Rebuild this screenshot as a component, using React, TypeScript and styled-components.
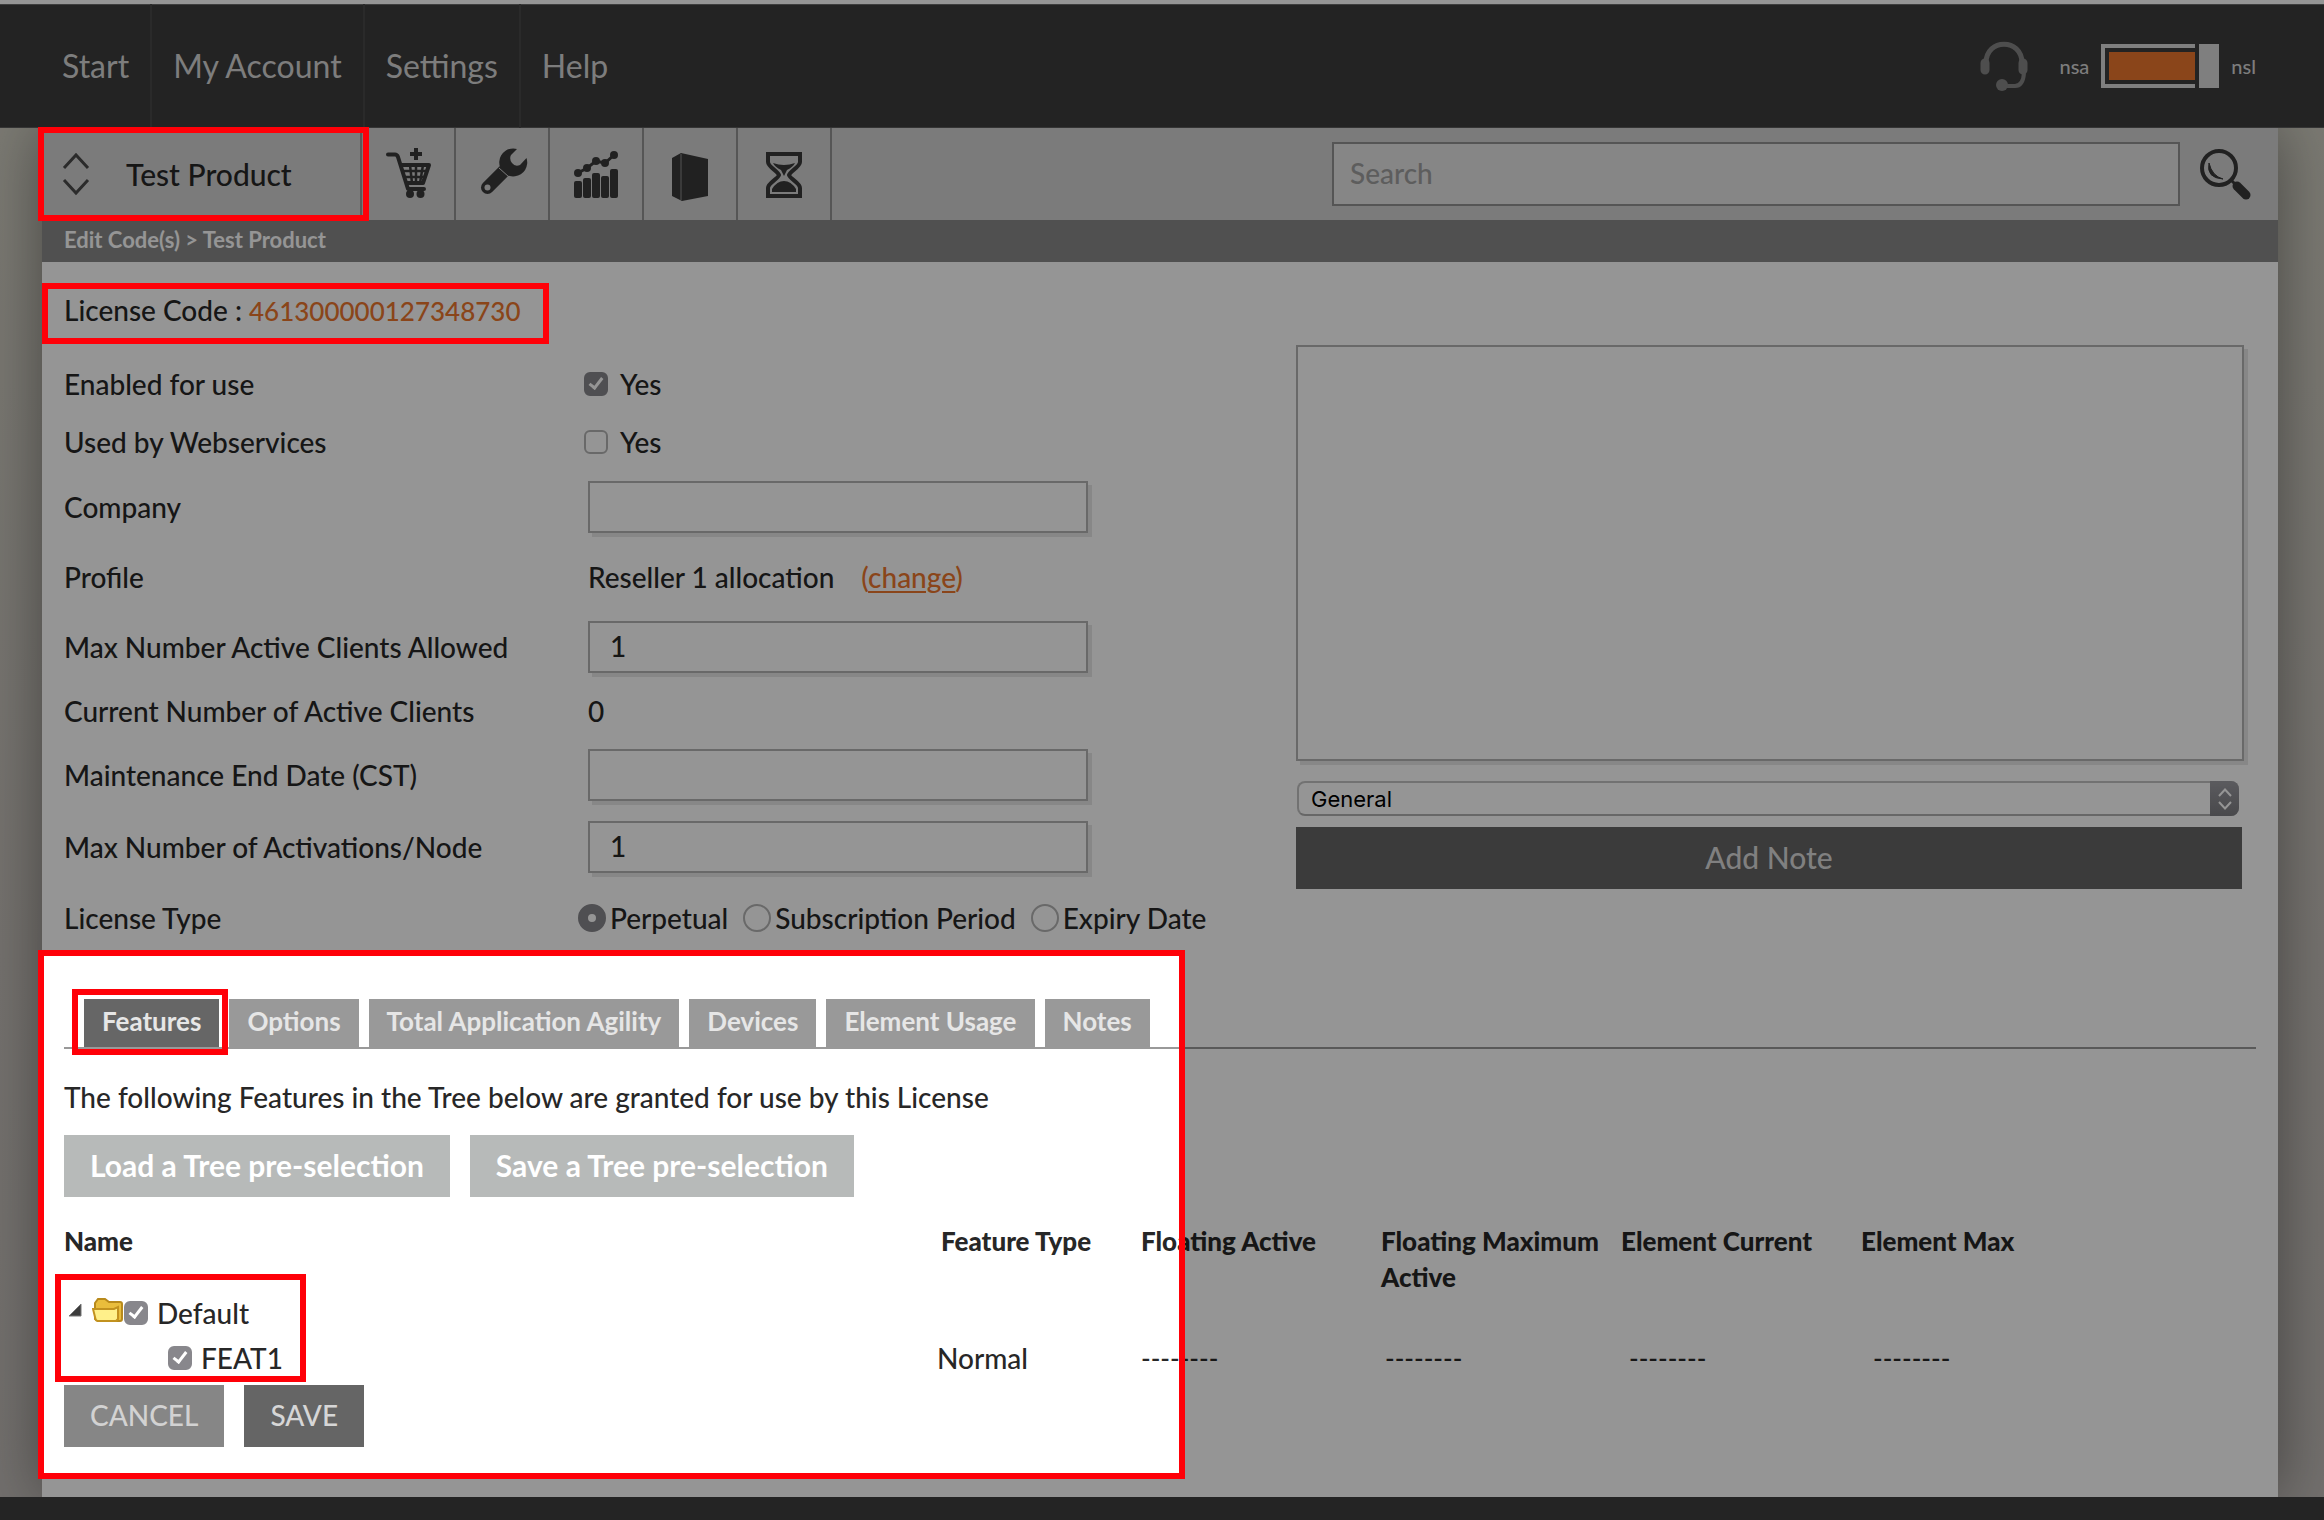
import React from 'react';
import styled, { createGlobalStyle, css } from 'styled-components';

const sans = `Lato, "Open Sans", "Liberation Sans", sans-serif`;
const ink = '#272727';
const accent = '#ed772e';
const line = '#b4b4b4';

const GlobalStyle = createGlobalStyle`
  *, *::before, *::after { box-sizing: border-box; }
  body {
    margin: 0;
    background: #3c3c3c;
    color: ${ink};
    font-family: ${sans};
    font-size: 28px;
    font-weight: 500;
    line-height: 36px;
  }
  button, input, select, textarea { font-family: inherit; font-weight: inherit; color: inherit; margin: 0; }
`;

const Page = styled.div`
  min-height: 100vh;
  display: flex;
  flex-direction: column;
`;

/* Red frame laid over the element that contains it. */
const Frame = styled.span<{ $top: number; $right: number; $bottom: number; $left: number }>`
  position: absolute;
  z-index: 2;
  top: ${p => -p.$top}px;
  right: ${p => -p.$right}px;
  bottom: ${p => -p.$bottom}px;
  left: ${p => -p.$left}px;
  border: 6px solid #ff0008;
  pointer-events: none;
`;

/* The frame that leaves its inside bright and dims the rest of the page. */
const Spotlight = styled.div`
  position: absolute;
  z-index: 1;
  top: -3px;
  bottom: 18px;
  left: -4px;
  width: 1147px;
  border: 6px solid #ff0008;
  box-shadow: 0 0 0 9999px rgba(0, 0, 0, 0.416);
  pointer-events: none;
`;

const TopBar = styled.header`
  position: relative;
  z-index: 0;
  display: flex;
  align-items: stretch;
  justify-content: space-between;
  height: 128px;
  padding: 0 68px 0 41px;
  background: #3c3c3c;
  border-top: 4px solid #fff;
  box-shadow: inset 0 1px 0 #6b6b6b, inset 0 -1px 0 #5c5c5c;
`;

const MainNav = styled.nav`
  display: flex;
`;

const NavLink = styled.a`
  display: flex;
  align-items: center;
  padding: 0 21px;
  border-right: 2px solid #484848;
  color: #d6d6d6;
  font-size: 32px;
  font-weight: 400;
  text-decoration: none;
  &:last-child { border-right: 0; }
`;

const Brand = styled.div`
  display: flex;
  align-items: center;
  gap: 12px;
  color: #d6d6d6;
  font-size: 20px;
  line-height: 24px;
`;

const HeadsetLink = styled.a`
  display: flex;
  margin-right: 18px;
`;

const Body = styled.div`
  padding: 0 46px 0 42px;
  background: linear-gradient(#d2d0c4, #c8c3bd 60%, #c4bfbb);
`;

const Panel = styled.main`
  background: #fff;
  box-shadow: 0 0 60px rgba(0, 0, 0, 0.42);
`;

const Toolbar = styled.div`
  display: flex;
  height: 92px;
  background: #d3d3d3;
`;

const ProductPicker = styled.button`
  position: relative;
  display: flex;
  align-items: center;
  gap: 36px;
  width: 320px;
  padding: 0 20px;
  border: 0;
  border-right: 2px solid #9a9a9a;
  background: none;
  font-size: 30px;
`;

const ToolButton = styled.button`
  display: flex;
  align-items: center;
  justify-content: center;
  width: 94px;
  padding: 0;
  border: 0;
  border-right: 2px solid #949494;
  background: none;
`;

const SearchForm = styled.form`
  display: flex;
  align-items: center;
  gap: 20px;
  flex: 1;
  margin: 0 26px 0 500px;
`;

const SearchInput = styled.input`
  flex: 1;
  min-width: 0;
  height: 64px;
  padding: 0 16px 2px;
  border: 2px solid #929292;
  background: #e6e6e6;
  font-size: 28px;
  &::placeholder { color: #a0a0a0; opacity: 1; }
`;

const PlainButton = styled.button`
  display: flex;
  padding: 0;
  border: 0;
  background: none;
`;

const Breadcrumb = styled.nav`
  height: 42px;
  padding: 0 22px;
  background: #898989;
  color: #fff;
  font-size: 22px;
  font-weight: 700;
  line-height: 40px;
`;

const LicenseLine = styled.div`
  padding: 30px 22px 26px;
`;

const LicenseCode = styled.span`
  position: relative;
  display: inline-block;
`;

const Accent = styled.span`
  color: ${accent};
`;

const CodeNumber = styled(Accent)`
  font-size: 26px;
`;

const FormArea = styled.div`
  display: grid;
  grid-template-columns: 1232fr 946fr;
  padding: 0 36px 0 22px;
`;

const Row = styled.div<{ $height: number }>`
  display: flex;
  align-items: center;
  height: ${p => p.$height}px;
`;

const Label = styled.label`
  width: 514px;
  flex: none;
`;

const Value = styled.div<{ $inset?: number; $gap?: number }>`
  display: flex;
  align-items: center;
  gap: ${p => p.$gap ?? 0}px;
  padding-left: ${p => p.$inset ?? 10}px;
`;

const boxed = css`
  border: 2px solid ${line};
  border-radius: 0;
  background: #fff;
  box-shadow: 4px 4px 0 #e8e8e8;
`;

const TextInput = styled.input`
  ${boxed}
  width: 500px;
  height: 52px;
  padding: 0 20px 2px;
  font-size: 28px;
`;

const Check = styled.input`
  appearance: none;
  position: relative;
  flex: none;
  width: 24px;
  height: 24px;
  border: 2px solid ${line};
  border-radius: 6px;
  background: #fff;
  &:checked { border-color: #88878c; background: #88878c; }
  &:checked::after {
    content: '';
    position: absolute;
    left: 6px;
    top: 1px;
    width: 8px;
    height: 14px;
    border: solid #fff;
    border-width: 0 3px 3px 0;
    transform: rotate(38deg);
  }
`;

const CheckLabel = styled.label`
  display: flex;
  align-items: center;
  gap: 12px;
`;

const Radio = styled.input`
  appearance: none;
  flex: none;
  width: 28px;
  height: 28px;
  border: 2px solid ${line};
  border-radius: 50%;
  background: #fff;
  &:checked { border: 10px solid #88878c; }
`;

const RadioLabel = styled.label`
  display: flex;
  align-items: center;
  gap: 4px;
`;

const ChangeLink = styled.a`
  color: ${accent};
  text-underline-offset: 3px;
`;

const Notes = styled.div`
  display: flex;
  flex-direction: column;
`;

const NoteText = styled.textarea`
  ${boxed}
  display: block;
  height: 416px;
  margin: -10px -2px 0 0;
  resize: none;
`;

const SelectBox = styled.div`
  position: relative;
  margin: 20px 3px 11px 1px;
`;

const Select = styled.select`
  appearance: none;
  display: block;
  width: 100%;
  height: 35px;
  padding: 0 40px 0 12px;
  border: 2px solid #c4c4c4;
  border-bottom-color: #b0b0b0;
  border-radius: 8px;
  background: #fff;
  color: #000;
  font-family: Inter, Roboto, sans-serif;
  font-size: 22px;
  font-weight: 400;
`;

const SelectArrows = styled.span`
  position: absolute;
  top: 0;
  right: 0;
  bottom: 0;
  display: flex;
  align-items: center;
  justify-content: center;
  width: 29px;
  border-radius: 0 8px 8px 0;
  background: linear-gradient(#9c9ca2, #7d7d82);
  pointer-events: none;
`;

const Button = styled.button<{ $tone: string; $text: string; $small?: boolean; $bold?: boolean }>`
  height: 62px;
  padding: 0 26px 3px;
  border: 0;
  background: ${p => p.$tone};
  color: ${p => p.$text};
  font-size: ${p => (p.$small ? 28 : 30)}px;
  font-weight: ${p => (p.$bold ? 700 : 500)};
`;

const Lower = styled.section`
  position: relative;
  padding: 46px 22px 50px;
`;

const Tabs = styled.div`
  display: flex;
  gap: 10px;
  padding-left: 20px;
  border-bottom: 2px solid #999;
`;

const Tab = styled.button<{ $active?: boolean }>`
  position: relative;
  height: 48px;
  padding: 0 18px 4px;
  border: 0;
  background: ${p => (p.$active ? '#666' : '#999')};
  color: #e6e6e6;
  font-size: 26px;
  font-weight: 700;
`;

const Intro = styled.p`
  margin: 30px 0 20px;
`;

const ButtonRow = styled.div`
  display: flex;
  gap: 20px;
`;

const Tree = styled.table`
  width: 2077px;
  margin-top: 26px;
  table-layout: fixed;
  border-collapse: collapse;
`;

const HeadCell = styled.th<{ $inset?: number }>`
  height: 72px;
  padding: 0 0 0 ${p => p.$inset ?? 0}px;
  font-size: 26px;
  font-weight: 900;
  text-align: left;
  vertical-align: top;
`;

const Cell = styled.td<{ $inset?: number }>`
  padding: 0 0 0 ${p => p.$inset ?? 0}px;
`;

const DashCell = styled(Cell)`
  font-size: 26px;
`;

const BodyRow = styled.tr<{ $height: number }>`
  height: ${p => p.$height}px;
`;

const Node = styled.div<{ $depth: number }>`
  position: relative;
  display: flex;
  align-items: center;
  padding-left: ${p => (p.$depth ? 104 : 4)}px;
`;

const NodeIcons = styled.span`
  display: flex;
  align-items: center;
  gap: 10px;
  padding-bottom: 6px;
`;

const NodeName = styled.label`
  display: flex;
  align-items: center;
  gap: 9px;
`;

/* Frame round the two tree rows, anchored to the first one. */
const TreeFrame = styled(Frame)`
  bottom: auto;
  right: auto;
  width: 251px;
  height: 108px;
`;

const Footer = styled.footer`
  position: relative;
  z-index: 0;
  flex: 1;
  min-height: 24px;
  background: #3e3e3e;
`;

const dark = '#3a3a3a';

const Chevrons = ({ w, h, stroke, color }: { w: number; h: number; stroke: number; color: string }) => (
  <svg width={w} height={h} viewBox="0 0 28 44" preserveAspectRatio="none" fill="none" stroke={color} strokeWidth={stroke}>
    <path d="M2 16 14 3 26 16M2 28 14 41 26 28" />
  </svg>
);

const Icon = ({ children }: { children: React.ReactNode }) => (
  <svg width="54" height="54" viewBox="0 0 54 54" fill={dark} aria-hidden="true">{children}</svg>
);

const CartIcon = () => (
  <Icon>
    <g fill="none" stroke={dark} strokeLinecap="round" strokeLinejoin="round">
      <path strokeWidth="4" d="M7 7.5H14Q16 7.5 17 10L27 42H43" />
      <path strokeWidth="4" d="M20 18H48L42 36H26" />
      <path strokeWidth="2.5" d="M22 24H46M24 30H44M29 18 31 36M35 18V36M42 18 39 36" />
    </g>
    <circle cx="29" cy="47" r="4" />
    <circle cx="39.5" cy="47" r="4" />
    <path d="M33 1h4v4h4v4h-4v4h-4V9h-4V5h4z" />
  </Icon>
);

const WrenchIcon = () => (
  <Icon>
    <path d="M42 2A14 14 0 1 0 51.5 11L45 18Q40 20 37 16 34 12 36 8Z" />
    <path d="M12.500 40.500 29 24" stroke={dark} strokeWidth="13" strokeLinecap="round" />
    <path d="M24 21 34 30" stroke="#d3d3d3" strokeWidth="1" />
    <circle cx="12.500" cy="40.500" r="3" fill="#d3d3d3" />
  </Icon>
);

const ChartIcon = () => (
  <Icon>
    <rect x="5" y="34" width="8" height="17" rx="2" />
    <rect x="14" y="31" width="8" height="20" rx="2" />
    <rect x="23" y="26" width="8" height="25" rx="2" />
    <rect x="32" y="29" width="8" height="22" rx="2" />
    <rect x="41" y="22" width="8" height="29" rx="2" />
    <path d="M9 26 18 21 27 14 36 16 45 8" fill="none" stroke={dark} strokeWidth="3" />
    <circle cx="9" cy="26" r="4" />
    <circle cx="18" cy="21" r="4" />
    <circle cx="27" cy="14" r="4" />
    <circle cx="36" cy="16" r="4" />
    <circle cx="45" cy="8" r="4" />
  </Icon>
);

const BookIcon = () => (
  <Icon>
    <path d="M9 11 18 6 45 12V49L19 54 9 49Z" />
    <path d="M18 7V53" stroke="#8c8c8c" strokeWidth="1" />
  </Icon>
);

const HourglassIcon = () => (
  <Icon>
    <path
      d="M11 7H43V15C43 20 33 24 32 28 33 32 43 36 43 41V49H11V41C11 36 21 32 22 28 21 24 11 20 11 15Z"
      fill="none"
      stroke={dark}
      strokeWidth="4"
    />
    <path d="M16 16Q27 20 38 16 36 20 30 23L27 29 24 23Q18 20 16 16Z" />
    <path d="M15 45V42Q20 34 27 34T39 42V45Z" />
  </Icon>
);

const HeadsetIcon = () => (
  <svg width="50" height="50" viewBox="0 0 50 50" fill="none" stroke="#868686" aria-hidden="true">
    <path strokeWidth="5" d="M7 22C7 -3 43 -3 43 22" />
    <path strokeWidth="9" strokeLinecap="round" d="M6 22V29M44 22V29" />
    <path strokeWidth="4" d="M45 32Q44 45 36 45H25" />
    <circle cx="23" cy="44" r="6" fill="#868686" stroke="none" />
  </svg>
);

const SearchIcon = () => (
  <svg width="52" height="52" viewBox="0 0 52 52" fill="none" stroke={dark} aria-hidden="true">
    <circle cx="19" cy="20" r="17" strokeWidth="4" />
    <path d="M9 15Q6 30 23 31 12 28 9 15Z" fill={dark} strokeWidth="1" />
    <path strokeWidth="3" d="M31 32 36 37" />
    <path strokeWidth="9" strokeLinecap="round" d="M37 38 46 47" />
  </svg>
);

const SwitchLogo = () => (
  <svg width="118" height="44" viewBox="0 0 118 44" aria-hidden="true">
    <path d="M0 0H94V4H4V40H94V44H0Z" fill="#dadada" />
    <rect x="8" y="8" width="86" height="28" fill={accent} />
    <rect x="98" y="0" width="20" height="44" fill="#dadada" />
  </svg>
);

const FolderIcon = () => (
  <svg width="32" height="26" viewBox="0 0 32 26" aria-hidden="true">
    <path d="M3 22V6L6 2H13L17 5H28Q30 5 30 7V22Q30 24 28 24H6Z" fill="#e9bd3c" stroke="#b88a1c" strokeWidth="2" />
    <path d="M1 12H22L26 10V22L24 24H6Q4 24 3.500 22Z" fill="#fff08a" stroke="#c2921f" strokeWidth="2" />
  </svg>
);

const ExpandIcon = () => (
  <svg width="14" height="14" viewBox="0 0 14 14" aria-hidden="true">
    <path d="M13 1V13H1Z" fill="#3c3c3c" stroke="#777" strokeWidth="1" />
  </svg>
);

const tools = [
  ['Add to cart', CartIcon],
  ['Tools', WrenchIcon],
  ['Reports', ChartIcon],
  ['Catalogue', BookIcon],
  ['History', HourglassIcon],
] as const;

const tabs = ['Features', 'Options', 'Total Application Agility', 'Devices', 'Element Usage', 'Notes'];
const dashes = '--------';

export default function App() {
  return (
    <Page>
      <GlobalStyle />
      <TopBar>
        <MainNav>
          {['Start', 'My Account', 'Settings', 'Help'].map(item => (
            <NavLink href="#" key={item}>{item}</NavLink>
          ))}
        </MainNav>
        <Brand>
          <HeadsetLink href="#" aria-label="Support"><HeadsetIcon /></HeadsetLink>
          <span>nsa</span>
          <SwitchLogo />
          <span>nsl</span>
        </Brand>
      </TopBar>

      <Body>
        <Panel>
          <Toolbar>
            <ProductPicker type="button">
              <Chevrons w={28} h={44} stroke={3} color="#4a4a4a" />
              Test Product
              <Frame $top={1} $right={9} $bottom={1} $left={4} />
            </ProductPicker>
            {tools.map(([name, Glyph]) => (
              <ToolButton type="button" aria-label={name} key={name}><Glyph /></ToolButton>
            ))}
            <SearchForm>
              <SearchInput placeholder="Search" aria-label="Search" />
              <PlainButton type="button" aria-label="Search"><SearchIcon /></PlainButton>
            </SearchForm>
          </Toolbar>
          <Breadcrumb>Edit Code(s) &gt; Test Product</Breadcrumb>

          <LicenseLine>
            <LicenseCode>
              License Code : <CodeNumber>461300000127348730</CodeNumber>
              <Frame $top={9} $right={29} $bottom={15} $left={22} />
            </LicenseCode>
          </LicenseLine>

          <FormArea>
            <div>
              <Row $height={58}>
                <Label htmlFor="enabled">Enabled for use</Label>
                <Value $inset={6}>
                  <CheckLabel><Check id="enabled" type="checkbox" defaultChecked />Yes</CheckLabel>
                </Value>
              </Row>
              <Row $height={58}>
                <Label htmlFor="webservices">Used by Webservices</Label>
                <Value $inset={6}>
                  <CheckLabel><Check id="webservices" type="checkbox" />Yes</CheckLabel>
                </Value>
              </Row>
              <Row $height={72}>
                <Label htmlFor="company">Company</Label>
                <Value><TextInput id="company" /></Value>
              </Row>
              <Row $height={68}>
                <Label as="span">Profile</Label>
                <Value $gap={27}>
                  Reseller 1 allocation
                  <Accent>(<ChangeLink href="#">change</ChangeLink>)</Accent>
                </Value>
              </Row>
              <Row $height={72}>
                <Label htmlFor="clients">Max Number Active Clients Allowed</Label>
                <Value><TextInput id="clients" defaultValue="1" /></Value>
              </Row>
              <Row $height={56}>
                <Label as="span">Current Number of Active Clients</Label>
                <Value>0</Value>
              </Row>
              <Row $height={72}>
                <Label htmlFor="maintenance">Maintenance End Date (CST)</Label>
                <Value><TextInput id="maintenance" /></Value>
              </Row>
              <Row $height={72}>
                <Label htmlFor="activations">Max Number of Activations/Node</Label>
                <Value><TextInput id="activations" defaultValue="1" /></Value>
              </Row>
              <Row $height={70}>
                <Label as="span">License Type</Label>
                <Value $inset={0} $gap={15}>
                  <RadioLabel><Radio type="radio" name="type" defaultChecked />Perpetual</RadioLabel>
                  <RadioLabel><Radio type="radio" name="type" />Subscription Period</RadioLabel>
                  <RadioLabel><Radio type="radio" name="type" />Expiry Date</RadioLabel>
                </Value>
              </Row>
            </div>

            <Notes>
              <NoteText aria-label="Note" />
              <SelectBox>
                <Select aria-label="Note type"><option>General</option></Select>
                <SelectArrows><Chevrons w={14} h={22} stroke={4} color="#fff" /></SelectArrows>
              </SelectBox>
              <Button type="button" $tone="#656565" $text="#dcdcdc">Add Note</Button>
            </Notes>
          </FormArea>

          <Lower>
            <Spotlight />
            <Tabs>
              {tabs.map((name, i) => (
                <Tab type="button" $active={i === 0} key={name}>
                  {name}
                  {i === 0 && <Frame $top={10} $right={9} $bottom={8} $left={12} />}
                </Tab>
              ))}
            </Tabs>
            <Intro>The following Features in the Tree below are granted for use by this License</Intro>
            <ButtonRow>
              <Button type="button" $tone="#b7bab9" $text="#fff" $bold>Load a Tree pre-selection</Button>
              <Button type="button" $tone="#b7bab9" $text="#fff" $bold>Save a Tree pre-selection</Button>
            </ButtonRow>

            <Tree>
              <colgroup>
                <col width="873" />
                <col width="204" />
                <col width="240" />
                <col width="240" />
                <col width="240" />
                <col width="280" />
              </colgroup>
              <thead>
                <tr>
                  <HeadCell>Name</HeadCell>
                  <HeadCell $inset={4}>Feature Type</HeadCell>
                  <HeadCell>Floating Active</HeadCell>
                  <HeadCell>Floating Maximum Active</HeadCell>
                  <HeadCell>Element Current</HeadCell>
                  <HeadCell>Element Max</HeadCell>
                </tr>
              </thead>
              <tbody>
                <BodyRow $height={36}>
                  <Cell colSpan={6}>
                    <Node $depth={0}>
                      <NodeIcons>
                        <PlainButton type="button" aria-label="Collapse"><ExpandIcon /></PlainButton>
                        <FolderIcon />
                      </NodeIcons>
                      <NodeName><Check type="checkbox" defaultChecked />Default</NodeName>
                      <TreeFrame $top={21} $right={0} $bottom={0} $left={9} />
                    </Node>
                  </Cell>
                </BodyRow>
                <BodyRow $height={54}>
                  <Cell>
                    <Node $depth={1}>
                      <NodeName><Check type="checkbox" defaultChecked />FEAT1</NodeName>
                    </Node>
                  </Cell>
                  <Cell>Normal</Cell>
                  <DashCell>{dashes}</DashCell>
                  <DashCell $inset={4}>{dashes}</DashCell>
                  <DashCell $inset={8}>{dashes}</DashCell>
                  <DashCell $inset={12}>{dashes}</DashCell>
                </BodyRow>
              </tbody>
            </Tree>

            <ButtonRow>
              <Button type="button" $tone="#868686" $text="#d2d2d2" $small>CANCEL</Button>
              <Button type="button" $tone="#656565" $text="#d6d6d6" $small>SAVE</Button>
            </ButtonRow>
          </Lower>
        </Panel>
      </Body>
      <Footer />
    </Page>
  );
}
